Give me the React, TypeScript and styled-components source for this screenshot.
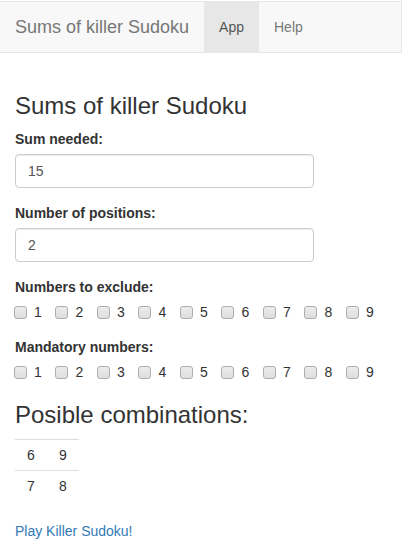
import React from "react";
import styled, { createGlobalStyle } from "styled-components";

const GlobalStyle = createGlobalStyle`
  html, body { margin: 0; padding: 0; background: #fff; }
  body {
    font-family: "Liberation Sans", Arial, sans-serif;
    font-size: 14px;
    line-height: 1.42857143;
    color: #333;
  }
  * { box-sizing: border-box; }
`;

const Navbar = styled.nav`
  display: flex;
  align-items: stretch;
  height: 52px;
  margin-top: 1px;
  margin-bottom: 20px;
  background: #f8f8f8;
  border: 1px solid #e7e7e7;
  border-left: none;
`;

const Brand = styled.a`
  display: block;
  padding: 15px;
  font-size: 18px;
  line-height: 20px;
  color: #777;
  text-decoration: none;
`;

const NavLink = styled.a<{ $active?: boolean }>`
  display: block;
  padding: 15px;
  line-height: 20px;
  color: ${(p) => (p.$active ? "#555" : "#777")};
  background: ${(p) => (p.$active ? "#e7e7e7" : "transparent")};
  text-decoration: none;
`;

const Container = styled.main`
  display: flow-root;
  padding: 0 15px;
`;

const Title = styled.h3`
  margin: 20px 0 10px;
  font-size: 24px;
  font-weight: 500;
  line-height: 1.1;
  color: #333;
`;

const FormGroup = styled.div`
  margin-bottom: 15px;
`;

const Label = styled.label`
  display: block;
  margin-bottom: 5px;
  font-weight: 700;
  line-height: 20px;
`;

const Input = styled.input`
  display: block;
  width: 299px;
  height: 34px;
  padding: 6px 12px;
  font-family: inherit;
  font-size: 14px;
  line-height: 1.42857143;
  color: #555;
  background: #fff;
  border: 1px solid #ccc;
  border-radius: 4px;
  box-shadow: inset 0 1px 1px rgba(0, 0, 0, 0.075);
  outline: none;
`;

const CheckRow = styled.div`
  display: flex;
  gap: 13.7px;
  height: 20px;
  align-items: center;
  margin-left: -1px;
`;

const CheckItem = styled.label`
  display: inline-flex;
  align-items: center;
  gap: 7px;
  line-height: 20px;
  color: #333;
`;

const Box = styled.input`
  appearance: none;
  -webkit-appearance: none;
  width: 13px;
  height: 13px;
  margin: 0;
  border: 1px solid #adadad;
  border-radius: 3px;
  background: linear-gradient(#ececec, #dedede);
`;

const ResultTable = styled.table`
  border-collapse: collapse;
  margin-bottom: 20px;
`;

const Cell = styled.td`
  width: 32px;
  padding: 5px;
  line-height: 20px;
  text-align: center;
  border-top: 1px solid #ddd;
`;

const PlayLink = styled.a`
  display: block;
  color: #337ab7;
  text-decoration: none;
  line-height: 20px;
`;

const digits = [1, 2, 3, 4, 5, 6, 7, 8, 9];

const CheckGroup: React.FC<{ name: string }> = ({ name }) => (
  <CheckRow>
    {digits.map((d) => (
      <CheckItem key={d}>
        <Box type="checkbox" name={`${name}-${d}`} />
        {d}
      </CheckItem>
    ))}
  </CheckRow>
);

const combos = [
  [6, 9],
  [7, 8],
];

export default function App() {
  return (
    <>
      <GlobalStyle />
      <Navbar>
        <Brand href="#">Sums of killer Sudoku</Brand>
        <NavLink href="#" $active>
          App
        </NavLink>
        <NavLink href="#">Help</NavLink>
      </Navbar>
      <Container>
        <Title>Sums of killer Sudoku</Title>
        <FormGroup>
          <Label>Sum needed:</Label>
          <Input type="text" defaultValue="15" />
        </FormGroup>
        <FormGroup>
          <Label>Number of positions:</Label>
          <Input type="text" defaultValue="2" />
        </FormGroup>
        <FormGroup>
          <Label>Numbers to exclude:</Label>
          <CheckGroup name="exclude" />
        </FormGroup>
        <div>
          <Label>Mandatory numbers:</Label>
          <CheckGroup name="mandatory" />
        </div>
        <Title>Posible combinations:</Title>
        <ResultTable>
          <tbody>
            {combos.map((row, i) => (
              <tr key={i}>
                {row.map((n, j) => (
                  <Cell key={j}>{n}</Cell>
                ))}
              </tr>
            ))}
          </tbody>
        </ResultTable>
        <PlayLink href="#">Play Killer Sudoku!</PlayLink>
      </Container>
    </>
  );
}
